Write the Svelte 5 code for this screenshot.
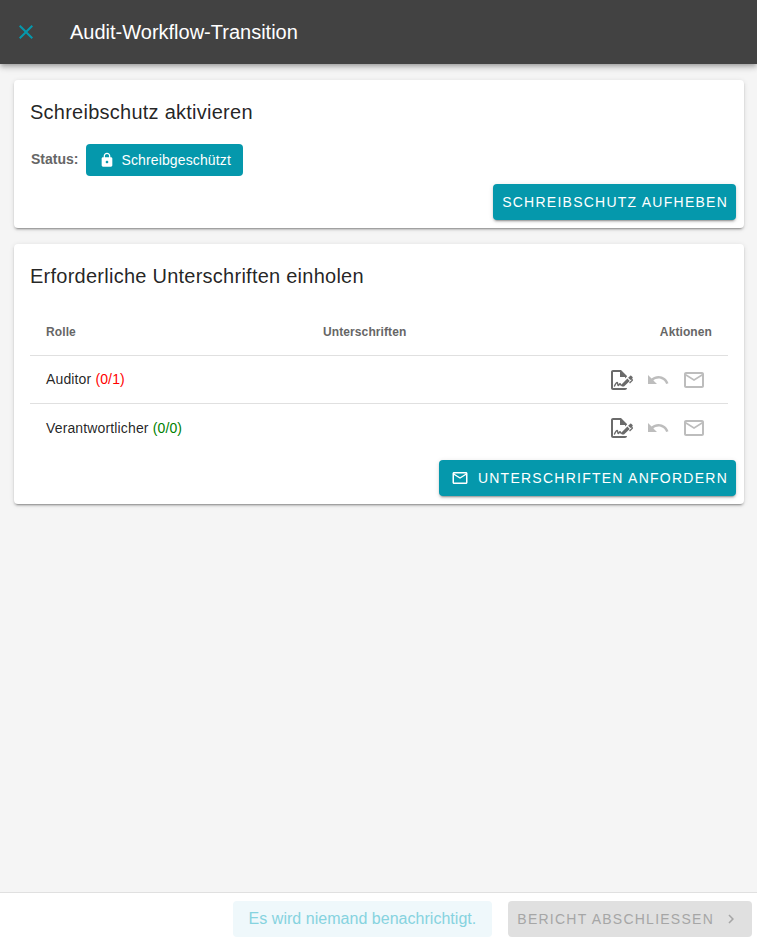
<script>
  const rows = [
    { role: "Auditor", count: "(0/1)", ok: false },
    { role: "Verantwortlicher", count: "(0/0)", ok: true },
  ];
</script>

<div class="page">
  <header class="toolbar">
    <button class="close" aria-label="Schließen">
      <svg viewBox="0 0 24 24" width="24" height="24"><path d="M19 6.41 17.59 5 12 10.59 6.41 5 5 6.41 10.59 12 5 17.59 6.41 19 12 13.41 17.59 19 19 17.59 13.41 12z" /></svg>
    </button>
    <div class="title">Audit-Workflow-Transition</div>
  </header>

  <main class="content">
    <section class="card lock-card">
      <h2>Schreibschutz aktivieren</h2>
      <div class="status">
        <span class="status-label">Status:</span>
        <span class="chip">
          <svg viewBox="0 0 24 24" width="16" height="16"><path d="M18 8h-1V6c0-2.76-2.24-5-5-5S7 3.24 7 6v2H6c-1.1 0-2 .9-2 2v10c0 1.1.9 2 2 2h12c1.1 0 2-.9 2-2V10c0-1.1-.9-2-2-2zm-6 9c-1.1 0-2-.9-2-2s.9-2 2-2 2 .9 2 2-.9 2-2 2zm3.1-9H8.9V6c0-1.71 1.39-3.1 3.1-3.1s3.1 1.39 3.1 3.1v2z" /></svg>
          Schreibgeschützt
        </span>
      </div>
      <div class="actions">
        <button class="btn">Schreibschutz aufheben</button>
      </div>
    </section>

    <section class="card sign-card">
      <h2>Erforderliche Unterschriften einholen</h2>
      <table>
        <thead>
          <tr>
            <th class="col-role">Rolle</th>
            <th class="col-sign">Unterschriften</th>
            <th class="col-act">Aktionen</th>
          </tr>
        </thead>
        <tbody>
          {#each rows as row}
            <tr>
              <td class="role">{row.role} <span class={row.ok ? "ok" : "missing"}>{row.count}</span></td>
              <td></td>
              <td class="col-act">
                <div class="icons">
                  <svg class="dark" viewBox="0 0 24 24" width="24" height="24">
                    <path d="M3 20V4h7v5h5v1.500l2-2V8l-6-6H3C1.900 2 1 2.900 1 4v16c0 1.100.9 2 2 2h12c1.100 0 2-.9 2-2H3z" />
                    <path d="M4.500 18c1-2.200 2-3.500 2.700-3.500.8 0 .3 3 1 3 .8 0 1.100-1.700 1.800-1.700.6 0 .5 1.500 1.500 1.500" fill="none" stroke="currentColor" stroke-width="1.400" stroke-linecap="round" />
                    <path d="M19.700 12.900 14 18.600h-2.300v-2.300l5.700-5.700 2.300 2.300zm3.400-.8c0 .3-.3.6-.6.9L20 15.500l-.9-.9 2.600-2.600-.6-.6-.7.7-2.300-2.300 2.200-2.100c.2-.2.6-.2.9 0l1.400 1.400c.2.200.2.600 0 .9-.2.200-.4.400-.4.600s.2.400.4.600c.3.300.6.600.5.900z" />
                  </svg>
                  <svg class="light" viewBox="0 0 24 24" width="24" height="24"><path d="M12.5 8c-2.65 0-5.05.99-6.900 2.600L2 7v9h9l-3.620-3.620c1.390-1.160 3.160-1.880 5.120-1.880 3.540 0 6.550 2.310 7.600 5.500l2.370-.78C21.080 11.030 17.150 8 12.500 8z" /></svg>
                  <svg class="light" viewBox="0 0 24 24" width="24" height="24"><path d="M22 6c0-1.100-.9-2-2-2H4c-1.100 0-2 .9-2 2v12c0 1.100.9 2 2 2h16c1.100 0 2-.9 2-2V6zm-2 0-8 5-8-5h16zm0 12H4V8l8 5 8-5v10z" /></svg>
                </div>
              </td>
            </tr>
          {/each}
        </tbody>
      </table>
      <div class="actions table-actions">
        <button class="btn with-icon">
          <svg viewBox="0 0 24 24" width="18" height="18"><path d="M22 6c0-1.100-.9-2-2-2H4c-1.100 0-2 .9-2 2v12c0 1.100.9 2 2 2h16c1.100 0 2-.9 2-2V6zm-2 0-8 5-8-5h16zm0 12H4V8l8 5 8-5v10z" /></svg>
          Unterschriften anfordern
        </button>
      </div>
    </section>
  </main>

  <footer class="footer">
    <div class="notice">Es wird niemand benachrichtigt.</div>
    <button class="btn-finish" disabled>
      Bericht abschliessen
      <svg viewBox="0 0 24 24" width="18" height="18"><path d="M8.590 16.590 13.170 12 8.590 7.410 10 6l6 6-6 6z" /></svg>
    </button>
  </footer>
</div>

<style>
  :global(body) {
    margin: 0;
    font-family: "Liberation Sans", Arial, sans-serif;
  }

  .page {
    display: flex;
    flex-direction: column;
    height: 100vh;
    background: #f5f5f5;
    color: rgba(0, 0, 0, 0.87);
    overflow: hidden;
  }

  .toolbar {
    flex: 0 0 64px;
    display: flex;
    align-items: center;
    background: #424242;
    color: #fff;
    box-shadow: 0 2px 4px -1px rgba(0, 0, 0, 0.2), 0 4px 5px rgba(0, 0, 0, 0.14), 0 1px 10px rgba(0, 0, 0, 0.12);
    position: relative;
  }

  .close {
    display: flex;
    width: 24px;
    height: 24px;
    margin-left: 14px;
    padding: 0;
    border: 0;
    background: none;
    color: #0598ac;
  }

  .close svg {
    fill: currentColor;
  }

  .title {
    margin-left: 32px;
    font-size: 20px;
  }

  .content {
    flex: 1;
    padding: 16px 13px 0 14px;
  }

  .card {
    background: #fff;
    border-radius: 4px;
    padding: 16px 8px 8px 16px;
    margin-bottom: 16px;
    box-shadow: 0 3px 1px -2px rgba(0, 0, 0, 0.2), 0 2px 2px rgba(0, 0, 0, 0.14), 0 1px 5px rgba(0, 0, 0, 0.12);
  }

  h2 {
    margin: 0;
    font-size: 20px;
    font-weight: 400;
    line-height: 32px;
    letter-spacing: 0.25px;
  }

  .status {
    display: flex;
    align-items: center;
    gap: 8px;
    margin-top: 16px;
  }

  .status-label {
    margin: 0 0 2px 1px;
    font-size: 14px;
    font-weight: 700;
    color: #666;
  }

  .chip {
    display: flex;
    align-items: center;
    gap: 6px;
    height: 32px;
    padding: 0 12px 0 13px;
    border-radius: 4px;
    background: #0598ac;
    color: #fff;
    font-size: 14px;
    letter-spacing: 0.13px;
  }

  .chip svg,
  .btn svg {
    fill: currentColor;
  }

  .actions {
    display: flex;
    justify-content: flex-end;
    margin-top: 8px;
  }

  .table-actions {
    margin-top: 9px;
  }

  .btn {
    display: flex;
    align-items: center;
    height: 36px;
    padding: 0 8px 0 9px;
    border: 0;
    border-radius: 4px;
    background: #0598ac;
    color: #fff;
    font: 400 14px "Liberation Sans", Arial, sans-serif;
    letter-spacing: 1.25px;
    text-transform: uppercase;
    box-shadow: 0 3px 1px -2px rgba(0, 0, 0, 0.2), 0 2px 2px rgba(0, 0, 0, 0.14), 0 1px 5px rgba(0, 0, 0, 0.12);
  }

  .with-icon {
    gap: 9px;
    padding-left: 12px;
  }

  table {
    width: 698px;
    margin-top: 16px;
    border-collapse: collapse;
    font-size: 14px;
    letter-spacing: 0.14px;
  }

  th {
    height: 47px;
    padding: 0 16px;
    font-size: 12px;
    font-weight: 700;
    letter-spacing: 0.1px;
    color: #666;
    text-align: left;
    border-bottom: 1px solid #e0e0e0;
  }

  td {
    height: 47px;
    padding: 0 16px;
  }

  tbody tr:first-child .role {
    height: 45px;
    padding-bottom: 2px;
  }

  tbody tr + tr td {
    border-top: 1px solid #e0e0e0;
  }

  .col-role {
    width: 245px;
  }

  th.col-act {
    text-align: right;
  }

  .col-act {
    width: 150px;
  }

  .icons {
    display: flex;
    justify-content: flex-end;
    gap: 12px;
    margin-right: 6px;
  }

  .icons svg {
    fill: currentColor;
  }

  .dark {
    color: #6b6b6b;
  }

  .light {
    color: #bdbdbd;
  }

  .missing {
    color: red;
  }

  .ok {
    color: green;
  }

  .footer {
    flex: 0 0 51px;
    box-sizing: border-box;
    display: flex;
    justify-content: flex-end;
    align-items: center;
    gap: 16px;
    padding: 2px 5px 0 0;
    background: #fff;
    border-top: 1px solid #e0e0e0;
  }

  .notice {
    display: flex;
    align-items: center;
    height: 36px;
    padding: 0 16px;
    border-radius: 4px;
    background: #eff8fb;
    color: #86d3df;
    font-size: 16px;
    letter-spacing: 0.03px;
  }

  .btn-finish {
    display: flex;
    align-items: center;
    gap: 8px;
    height: 36px;
    padding: 0 12px 0 9px;
    border: 0;
    border-radius: 4px;
    background: #e0e0e0;
    color: #a6a6a6;
    font: 400 14px "Liberation Sans", Arial, sans-serif;
    letter-spacing: 1.25px;
    text-transform: uppercase;
  }

  .btn-finish svg {
    fill: currentColor;
  }
</style>
